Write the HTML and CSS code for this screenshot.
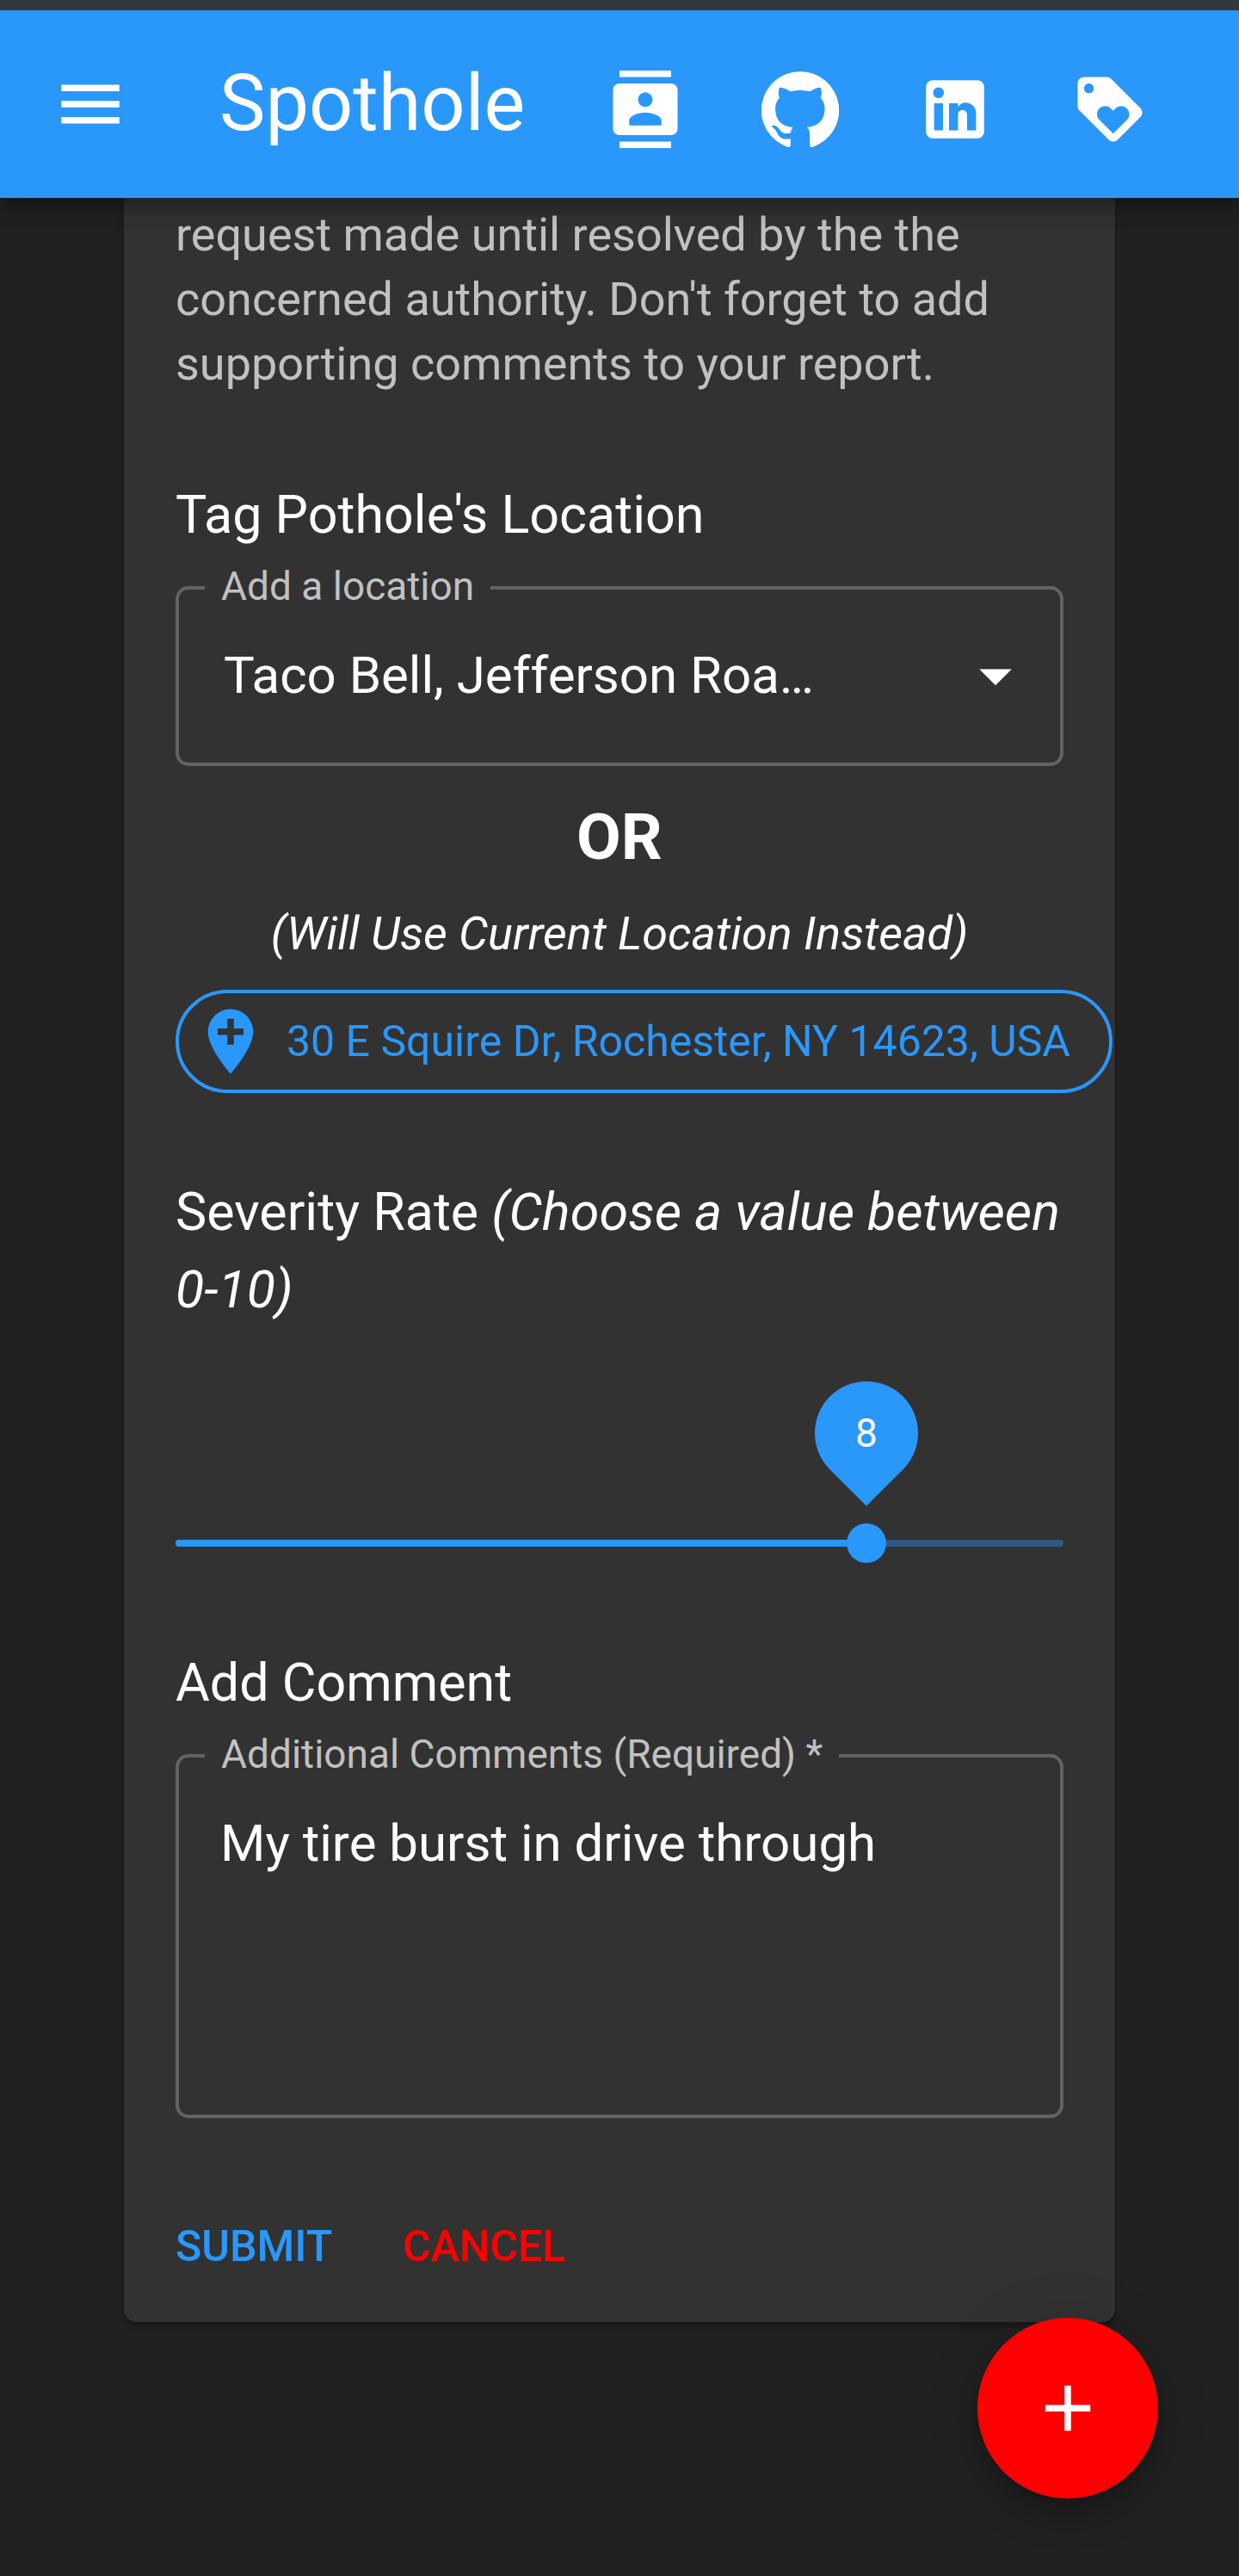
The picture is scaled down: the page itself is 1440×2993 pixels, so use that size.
FILE: index.html
```html
<!DOCTYPE html>
<html lang="en">
<head>
  <meta charset="utf-8">
  <meta name="viewport" content="width=device-width, initial-scale=1">
  <title>Spothole</title>
  <link rel="stylesheet" href="styles.css">
</head>
<body>
  <header class="app-bar">
    <button class="icon-button menu-button" type="button" aria-label="Menu">
      <svg class="icon" viewBox="0 0 24 24"><path d="M3 18h18v-2H3v2zm0-5h18v-2H3v2zm0-7v2h18V6H3z"/></svg>
    </button>
    <h1 class="brand">Spothole</h1>
    <nav class="app-links">
      <a class="icon-button" href="#contacts" aria-label="Contacts">
        <svg class="icon" viewBox="0 0 24 24"><path d="M20 0H4v2h16V0zM4 24h16v-2H4v2zM20 4H4c-1.1 0-2 .9-2 2v12c0 1.1.9 2 2 2h16c1.1 0 2-.9 2-2V6c0-1.1-.9-2-2-2zm-8 2.75c1.24 0 2.25 1.01 2.25 2.25s-1.01 2.25-2.25 2.25S9.75 10.240 9.750 9 10.760 6.750 12 6.750zM17 17H7v-1.500c0-1.670 3.330-2.500 5-2.500s5 .830 5 2.500V17z"/></svg>
      </a>
      <a class="icon-button" href="#github" aria-label="GitHub">
        <svg class="icon" viewBox="0 0 24 24"><path d="M12 .3a12 12 0 0 0-3.800 23.400c.600.100.800-.300.800-.600v-2c-3.300.700-4-1.600-4-1.600-.600-1.400-1.400-1.800-1.400-1.800-1-.700.100-.700.100-.700 1.200 0 1.900 1.200 1.900 1.200 1 1.800 2.800 1.300 3.500 1 0-.800.400-1.300.700-1.600-2.700-.300-5.500-1.300-5.500-6 0-1.200.500-2.300 1.300-3.100-.200-.400-.600-1.600 0-3.200 0 0 1-.300 3.400 1.200a11.500 11.500 0 0 1 6 0c2.300-1.500 3.300-1.200 3.300-1.200.600 1.600.200 2.800 0 3.200.900.800 1.300 1.900 1.300 3.200 0 4.600-2.800 5.600-5.500 5.900.500.400.900 1 .900 2.200v3.300c0 .300.100.700.800.600A12 12 0 0 0 12 .3"/></svg>
      </a>
      <a class="icon-button" href="#linkedin" aria-label="LinkedIn">
        <svg class="icon" viewBox="0 0 24 24"><path d="M19 3a2 2 0 0 1 2 2v14a2 2 0 0 1-2 2H5a2 2 0 0 1-2-2V5a2 2 0 0 1 2-2h14m-.5 15.500v-5.300a3.260 3.260 0 0 0-3.260-3.260c-.850 0-1.840.520-2.320 1.300v-1.110h-2.790v8.370h2.790v-4.930c0-.770.620-1.400 1.390-1.400a1.400 1.400 0 0 1 1.400 1.400v4.930h2.790M6.880 8.560a1.680 1.680 0 0 0 1.680-1.680c0-.930-.750-1.690-1.680-1.690a1.690 1.690 0 0 0-1.690 1.690c0 .930.760 1.680 1.690 1.680m1.390 9.940v-8.370H5.500v8.370h2.770z"/></svg>
      </a>
      <a class="icon-button" href="#loyalty" aria-label="Support">
        <svg class="icon" viewBox="0 0 24 24"><path d="M21.410 11.580l-9-9C12.050 2.220 11.550 2 11 2H4c-1.100 0-2 .9-2 2v7c0 .550.220 1.050.590 1.420l9 9c.360.360.860.580 1.410.580.550 0 1.050-.220 1.410-.590l7-7c.370-.360.590-.860.590-1.410 0-.550-.230-1.060-.590-1.420zM5.500 7C4.670 7 4 6.330 4 5.500S4.670 4 5.500 4 7 4.670 7 5.500 6.330 7 5.500 7zm11.770 8.270L13 19.540l-4.270-4.270C8.280 14.810 8 14.190 8 13.500c0-1.380 1.120-2.500 2.500-2.500.690 0 1.320.280 1.770.740l.730.720.730-.730c.450-.450 1.080-.730 1.770-.730 1.380 0 2.500 1.120 2.500 2.500 0 .690-.280 1.320-.730 1.770z"/></svg>
      </a>
    </nav>
  </header>

  <main class="page">
    <form class="card">
      <p class="intro">request made until resolved by the the concerned authority. Don't forget to add supporting comments to your report.</p>

      <h2 class="section-title">Tag Pothole's Location</h2>
      <fieldset class="field">
        <legend class="field-legend"><label for="location">Add a location</label></legend>
        <div class="select-wrap">
          <select class="select" id="location">
            <option>Taco Bell, Jefferson Roa…</option>
          </select>
          <svg class="icon select-arrow" viewBox="0 0 24 24"><path d="M7 10l5 5 5-5z"/></svg>
        </div>
      </fieldset>

      <p class="or">OR</p>
      <p class="hint">(Will Use Current Location Instead)</p>
      <button class="chip" type="button">
        <svg class="icon" viewBox="0 0 24 24"><path d="M12 2C8.140 2 5 5.140 5 9c0 5.250 7 13 7 13s7-7.750 7-13c0-3.860-3.140-7-7-7zm4 8h-3v3h-2v-3H8V8h3V5h2v3h3v2z"/></svg>
        <span>30 E Squire Dr, Rochester, NY 14623, USA</span>
      </button>

      <h2 class="section-title"><label for="severity">Severity Rate <em>(Choose a value between 0-10)</em></label></h2>
      <div class="slider">
        <div class="slider-rail"></div>
        <div class="slider-fill" style="width: 77.78%">
          <output class="slider-value" for="severity"><span>8</span></output>
        </div>
        <input class="slider-input" id="severity" type="range" min="1" max="10" value="8">
      </div>

      <h2 class="section-title">Add Comment</h2>
      <fieldset class="field">
        <legend class="field-legend"><label for="comment">Additional Comments (Required) *</label></legend>
        <textarea class="textarea" id="comment" rows="3" required>My tire burst in drive through</textarea>
      </fieldset>

      <div class="actions">
        <button class="text-button" type="submit">SUBMIT</button>
        <button class="text-button text-button-cancel" type="button">CANCEL</button>
      </div>
    </form>
  </main>

  <button class="fab" type="button" aria-label="Add">
    <svg class="icon" viewBox="0 0 24 24"><path d="M19 13h-6v6h-2v-6H5v-2h6V5h2v6h6v2z"/></svg>
  </button>
</body>
</html>
```
FILE: styles.css
```css
:root {
  --blue: #2a97fa;
  --red: #ff0000;
  --page: #212121;
  --paper: #323232;
  --outline: #636363;
  --muted: #c1c1c1;
}

* {
  box-sizing: border-box;
}

body {
  margin: 0;
  min-height: 100vh;
  background: var(--page);
  color: #fff;
  font-family: Roboto, "Liberation Sans", sans-serif;
  font-size: 60px;
  line-height: 90px;
}

h1, h2, p {
  margin: 0;
  font-weight: 400;
}

button, select, textarea {
  margin: 0;
  padding: 0;
  border: 0;
  background: none;
  color: inherit;
  font: inherit;
}

button {
  cursor: pointer;
}

.icon {
  display: block;
  flex: none;
  width: 90px;
  height: 90px;
  fill: currentColor;
}

/* App bar */

.app-bar {
  position: relative;
  z-index: 1;
  display: flex;
  align-items: center;
  height: 230px;
  padding: 0 60px;
  border-top: 12px solid #34373b;
  background: var(--blue);
  box-shadow: 0 8px 15px -4px rgba(0, 0, 0, 0.2), 0 15px 19px rgba(0, 0, 0, 0.14), 0 4px 38px rgba(0, 0, 0, 0.12);
}

.icon-button {
  display: block;
  padding: 45px;
  color: #fff;
}

.menu-button {
  padding: 0;
}

.brand {
  margin-left: 105px;
  font-size: 90px;
  line-height: 120px;
}

.app-links {
  display: flex;
  margin-left: auto;
  padding-top: 12px;
}

/* Report card */

.page {
  padding: 0 10%;
}

.card {
  display: flex;
  flex-direction: column;
  padding: 5px 60px 45px;
  border-radius: 0 0 15px 15px;
  background: var(--paper);
  box-shadow: 0 4px 4px rgba(0, 0, 0, 0.2), 0 4px 8px rgba(0, 0, 0, 0.14);
}

.intro {
  margin-bottom: 93px;
  color: var(--muted);
  font-size: 54px;
  line-height: 75px;
}

.section-title {
  font-size: 61px;
}

.field {
  min-width: 0;
  margin: 13px 0 0;
  padding: 30px;
  border: 4px solid var(--outline);
  border-radius: 15px;
}

.field-legend {
  padding: 0 19px 4px;
  color: var(--muted);
  font-size: 46px;
  line-height: 50px;
}

.select-wrap {
  display: grid;
  align-items: center;
  margin-bottom: 26px;
}

.select-wrap > * {
  grid-area: 1 / 1;
}

.select {
  width: 100%;
  height: 90px;
  padding: 0 90px 0 22px;
  appearance: none;
}

.select-arrow {
  justify-self: end;
  pointer-events: none;
}

.or {
  margin-top: 37px;
  font-size: 75px;
  font-weight: 700;
  text-align: center;
}

.hint {
  margin: 30px 0 28px;
  font-size: 54px;
  font-style: italic;
  line-height: 75px;
  text-align: center;
}

.chip {
  display: flex;
  align-items: center;
  align-self: flex-start;
  gap: 20px;
  height: 120px;
  margin-bottom: 93px;
  padding: 0 45px 0 15px;
  border: 4px solid var(--blue);
  border-radius: 60px;
  color: var(--blue);
  font-size: 50px;
  white-space: nowrap;
}

/* Severity slider */

.slider {
  display: grid;
  align-items: center;
  height: 46px;
  margin: 227px 0 94px;
}

.slider > * {
  grid-area: 1 / 1;
}

.slider-rail,
.slider-fill {
  height: 8px;
  border-radius: 4px;
  background: var(--blue);
}

.slider-rail {
  opacity: 0.4;
}

.slider-fill {
  position: relative;
}

.slider-value {
  position: absolute;
  right: -60px;
  bottom: 72px;
  display: grid;
  place-items: center;
  width: 120px;
  height: 120px;
  border-radius: 50% 50% 50% 0;
  background: var(--blue);
  font-size: 46px;
  transform: rotate(-45deg);
}

.slider-value span {
  transform: rotate(45deg);
}

.slider-input {
  position: relative;
  height: 46px;
  margin: 0 -23px;
  appearance: none;
  background: none;
}

.slider-input::-webkit-slider-thumb {
  width: 46px;
  height: 46px;
  border: 0;
  border-radius: 50%;
  appearance: none;
  background: var(--blue);
}

.textarea {
  display: block;
  width: 100%;
  min-height: 330px;
  padding: 0 18px;
  resize: none;
}

.actions {
  display: flex;
  gap: 82px;
  margin-top: 106px;
}

.text-button {
  color: var(--blue);
  font-size: 50px;
  font-weight: 500;
  line-height: 86px;
}

.text-button-cancel {
  color: var(--red);
}

.fab {
  position: fixed;
  right: 94px;
  bottom: 90px;
  z-index: 2;
  display: grid;
  place-items: center;
  width: 210px;
  height: 210px;
  border-radius: 50%;
  background: var(--red);
  box-shadow: 0 11px 19px -4px rgba(0, 0, 0, 0.2), 0 23px 38px rgba(0, 0, 0, 0.14), 0 4px 68px rgba(0, 0, 0, 0.12);
}
```
